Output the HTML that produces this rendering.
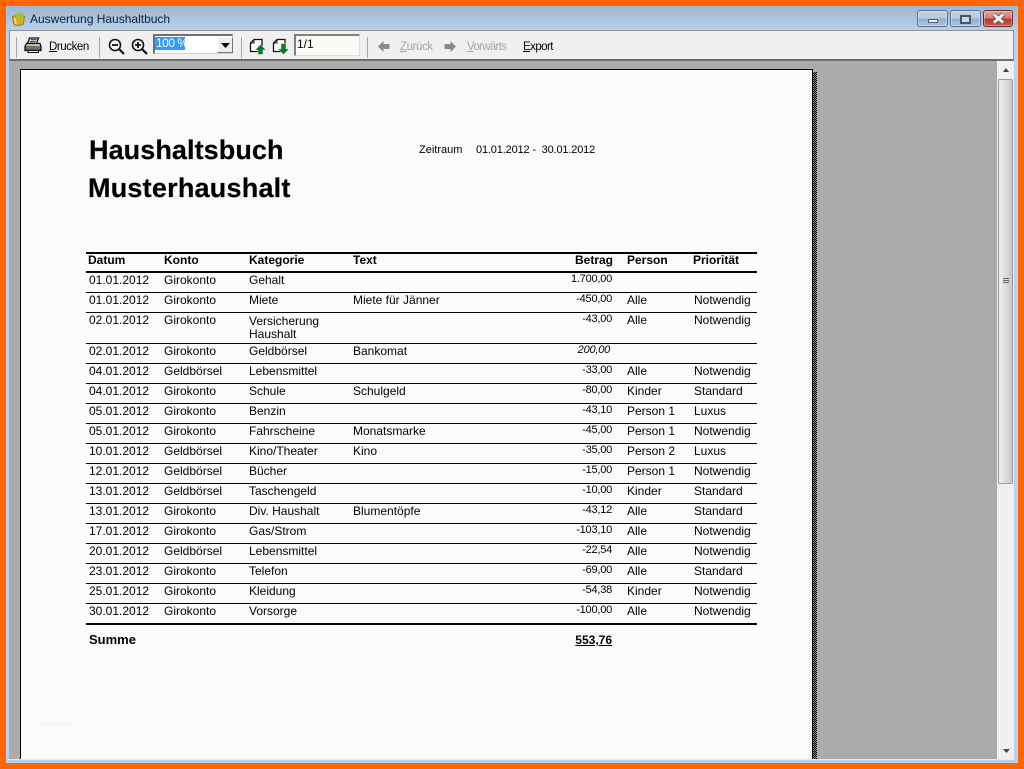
<!DOCTYPE html>
<html><head><meta charset="utf-8"><style>
html,body{margin:0;padding:0;width:1024px;height:769px;overflow:hidden;background:#ff6600}
body{position:relative;font-family:"Liberation Sans",sans-serif;color:#000}
div,svg{position:absolute}
.t{white-space:nowrap;font-size:12px;line-height:14px}
.b{font-weight:bold}
.r{text-align:right}
.m{font-size:11px;letter-spacing:-.22px}
.l{left:86px;width:671px;height:1px;background:#000}
.tb{font-size:11.5px;line-height:14px;white-space:nowrap;letter-spacing:-.42px}
.sep{width:1px;height:21px;top:37px;background:#a8a8a8}
u{text-decoration:underline}
.wb{top:10px;height:17px;border:1px solid #56708e;border-radius:3px;box-sizing:border-box;background:linear-gradient(#bcd0e6 0,#b6cce4 45%,#94aecb 55%,#adc5df 100%);box-shadow:inset 0 0 0 1px rgba(255,255,255,.35)}
</style></head><body>
<div style="left:6px;top:6px;width:1012px;height:757px;background:#b9d1ea"></div>
<div style="left:6px;top:6px;width:1012px;height:25px;background:linear-gradient(#9db6d3,#b9d2eb)"></div>
<svg style="left:11px;top:11px" width="16" height="16" viewBox="0 0 16 16"><path d="M1.500 5.500Q7 3.500 13.500 5.500L12.500 13Q7.500 15.500 3 13.500z" fill="#e0ac24" stroke="#8d7420" stroke-width=".9"/><path d="M4 4.500L6.500 1.500h3.500l3.500 2.500-2.500 3H6z" fill="#92c83e"/><path d="M3.500 7l1.500 6" stroke="#f7e08a" stroke-width="1.600"/></svg>
<div class="t" style="left:30px;top:12px;font-size:12px;color:#10202f">Auswertung Haushaltbuch</div>
<div class="wb" style="left:917px;width:31px"><div style="left:10px;top:8px;width:8px;height:2px;background:#eef2f7;border:1px solid #4d5f74"></div></div>
<div class="wb" style="left:950px;width:31px"><div style="left:9px;top:4px;width:7px;height:5px;border:2px solid #46586c;background:#c4d6ea"></div></div>
<div class="wb" style="left:983px;width:30px;border-color:#6e2a2a;background:linear-gradient(#e0a09a 0,#d67f76 45%,#b8392c 55%,#c9584b 100%)"><svg style="left:8px;top:1px" width="13" height="13" viewBox="0 0 13 13"><path d="M2 2.500l9 8M11 2.500l-9 8" stroke="#44505e" stroke-width="4.600"/><path d="M2 2.500l9 8M11 2.500l-9 8" stroke="#f4f4f4" stroke-width="3"/></svg></div>

<div style="left:9px;top:30px;width:1005px;height:31px;background:#f0f0f0;border-top:1px solid #8e9297;border-bottom:2px solid #6e6e6e;box-sizing:border-box;border-left:1px solid #8e9297;border-right:1px solid #8e9297"></div>
<div class="sep" style="left:16px"></div>
<div class="sep" style="left:99px"></div>
<div class="sep" style="left:241px"></div>
<div class="sep" style="left:367px"></div>
<svg style="left:24px;top:37px" width="18" height="17" viewBox="0 0 18 17"><path d="M5.500 1h9l-2 5.500h-9z" fill="#fff" stroke="#111" stroke-width="1.300"/><path d="M6.500 2.800h6M5.500 4.800h6" stroke="#111"/><path d="M2.500 6.500h13.500l1 3v4H1v-4z" fill="#ccc" stroke="#111" stroke-width="1.300"/><path d="M1.500 10h15M1.500 12h15" stroke="#111"/><path d="M4 8.500h7" stroke="#e3c040" stroke-width="1.500"/><path d="M4 13.500h10.500v2H4z" fill="#fff" stroke="#111"/></svg>
<div class="tb" style="left:49px;top:40px"><u>D</u>rucken</div>
<svg style="left:108px;top:38px" width="17" height="17" viewBox="0 0 17 17"><circle cx="7" cy="7" r="5.500" fill="#f8f8f8" stroke="#111" stroke-width="1.600"/><path d="M4 7h6" stroke="#111" stroke-width="1.800"/><path d="M11 11l5 5" stroke="#111" stroke-width="2.200"/></svg>
<svg style="left:131px;top:38px" width="17" height="17" viewBox="0 0 17 17"><circle cx="7" cy="7" r="5.500" fill="#f8f8f8" stroke="#111" stroke-width="1.600"/><path d="M4 7h6M7 4v6" stroke="#111" stroke-width="1.800"/><path d="M11 11l5 5" stroke="#111" stroke-width="2.200"/></svg>
<div style="left:153px;top:34px;width:80px;height:20px;background:#fff;border:1px solid #d0d0d0;border-top:2px solid #707070;border-left:2px solid #707070;box-sizing:border-box"></div>
<div class="t" style="left:155px;top:37px;width:30px;height:13px;line-height:13px;background:#3399ff;color:#fff;letter-spacing:-.5px;padding-left:0"><span style="margin-left:1px">100 %</span></div>
<div style="left:217px;top:37px;width:16px;height:16px;background:#eee;border:1px solid #777;border-top-color:#fff;border-left-color:#fff;box-sizing:border-box"></div>
<svg style="left:221px;top:43px" width="9" height="5" viewBox="0 0 9 5"><path d="M0 0h9L4.500 5z" fill="#000"/></svg>
<svg style="left:249px;top:37px" width="18" height="18" viewBox="0 0 18 18"><path d="M5 2.500h8v12H1.500V6z" fill="#fff" stroke="#111" stroke-width="1.300"/><path d="M5 2.500V6H1.500" fill="none" stroke="#111"/><path d="M11.500 7.500L17 13H14V17.500H9V13H6z" fill="#0a7a20" stroke="#f0f0f0" stroke-width=".5"/></svg>
<svg style="left:272px;top:37px" width="18" height="18" viewBox="0 0 18 18"><path d="M5 2.500h8v12H1.500V6z" fill="#fff" stroke="#111" stroke-width="1.300"/><path d="M5 2.500V6H1.500" fill="none" stroke="#111"/><path d="M9 6.500H14V12H17L11.500 17.500 6 12H9z" fill="#0a7a20" stroke="#f0f0f0" stroke-width=".5"/></svg>
<div style="left:294px;top:34px;width:66px;height:22px;background:#fbfbf6;border:1px solid #dcdcdc;border-top:2px solid #808080;border-left:2px solid #808080;box-sizing:border-box"></div>
<div class="t" style="left:297px;top:37px">1/1</div>
<svg style="left:378px;top:41px" width="12" height="11" viewBox="0 0 12 11"><path d="M0 5.500L5.500 0V3H11.500V8H5.500V11z" fill="#8c8c8c"/></svg>
<div class="tb" style="left:400px;top:40px;color:#a6a6a6"><u>Z</u>urück</div>
<svg style="left:444px;top:41px" width="12" height="11" viewBox="0 0 12 11"><path d="M12 5.500L6.500 0V3H.5V8H6.500V11z" fill="#8c8c8c"/></svg>
<div class="tb" style="left:467px;top:40px;color:#a6a6a6;letter-spacing:-.7px"><u>V</u>orwärts</div>
<div class="tb" style="left:523px;top:40px;letter-spacing:-.55px"><u>E</u>xport</div>

<div style="left:9px;top:61px;width:988px;height:698px;background:#ababab"></div>
<div style="left:813px;top:72px;width:4px;height:687px;background:repeating-conic-gradient(#000 0 25%,#888 0 50%) 0 0/2px 2px"></div>
<div style="left:20px;top:69px;width:793px;height:690px;background:#fbfbfb;border:solid #000;border-width:1px 1px 0 1px;box-sizing:border-box"></div>

<div style="left:997px;top:61px;width:17px;height:698px;background:#f0f0f0"></div>
<svg style="left:1003px;top:68px" width="6" height="4" viewBox="0 0 6 4"><path d="M3 0l3 4H0z" fill="#444"/></svg>
<svg style="left:1003px;top:749px" width="7" height="4" viewBox="0 0 7 4"><path d="M3.500 4l3.500-4H0z" fill="#444"/></svg>
<div style="left:998px;top:79px;width:15px;height:405px;border:1px solid #9a9a9a;border-radius:2px;box-sizing:border-box;background:linear-gradient(90deg,#f0f0f0,#dcdcdc 50%,#c8c8c8)"></div>
<svg style="left:1002px;top:277px" width="8" height="8" viewBox="0 0 8 8"><path d="M1 1.500h6M1 3.500h6M1 5.500h6" stroke="#666"/></svg>
<div style="left:8px;top:759px;width:1006px;height:1px;background:#f1e6e0"></div>

<div class="t b" style="left:89px;top:134px;font-size:27px;line-height:33px;-webkit-text-stroke:.2px #000;letter-spacing:.08px">Haushaltsbuch</div>
<div class="t b" style="left:88px;top:172px;font-size:27px;line-height:33px;-webkit-text-stroke:.2px #000;letter-spacing:.22px">Musterhaushalt</div>
<div class="t" style="left:419px;top:143px;font-size:11px">Zeitraum</div>
<div class="t" style="left:476px;top:143px;font-size:11px;letter-spacing:-.16px">01.01.2012 -&nbsp; 30.01.2012</div>
<div class="t" style="left:40px;top:718px;font-size:10px;color:#f1f1f1">vorlage</div>

<div class="l" style="top:252px;height:2px"></div>
<div class="l" style="top:271px;height:2px"></div>
<div class="l" style="top:292px"></div><div class="l" style="top:312px"></div><div class="l" style="top:343px"></div><div class="l" style="top:363px"></div><div class="l" style="top:383px"></div><div class="l" style="top:403px"></div><div class="l" style="top:423px"></div><div class="l" style="top:443px"></div><div class="l" style="top:463px"></div><div class="l" style="top:483px"></div><div class="l" style="top:503px"></div><div class="l" style="top:523px"></div><div class="l" style="top:543px"></div><div class="l" style="top:563px"></div><div class="l" style="top:583px"></div><div class="l" style="top:603px"></div>
<div class="l" style="top:623px;height:2px"></div>

<div class="t b" style="left:88px;top:253px">Datum</div><div class="t b" style="left:164px;top:253px">Konto</div><div class="t b" style="left:249px;top:253px">Kategorie</div><div class="t b" style="left:353px;top:253px">Text</div><div class="t b r" style="left:513px;width:100px;top:253px">Betrag</div><div class="t b" style="left:627px;top:253px">Person</div><div class="t b" style="left:693px;top:253px">Priorität</div>

<div class="t" style="left:89px;top:273px">01.01.2012</div><div class="t" style="left:164px;top:273px">Girokonto</div><div class="t" style="left:249px;top:273px">Gehalt</div><div class="t r m" style="left:512px;width:100px;top:272px">1.700,00</div>
<div class="t" style="left:89px;top:293px">01.01.2012</div><div class="t" style="left:164px;top:293px">Girokonto</div><div class="t" style="left:249px;top:293px">Miete</div><div class="t" style="left:353px;top:293px">Miete für Jänner</div><div class="t r m" style="left:512px;width:100px;top:292px">-450,00</div><div class="t" style="left:627px;top:293px">Alle</div><div class="t" style="left:694px;top:293px">Notwendig</div>
<div class="t" style="left:89px;top:313px">02.01.2012</div><div class="t" style="left:164px;top:313px">Girokonto</div><div class="t" style="left:249px;top:314px">Versicherung</div><div class="t" style="left:249px;top:327px">Haushalt</div><div class="t r m" style="left:512px;width:100px;top:312px">-43,00</div><div class="t" style="left:627px;top:313px">Alle</div><div class="t" style="left:694px;top:313px">Notwendig</div>
<div class="t" style="left:89px;top:344px">02.01.2012</div><div class="t" style="left:164px;top:344px">Girokonto</div><div class="t" style="left:249px;top:344px">Geldbörsel</div><div class="t" style="left:353px;top:344px">Bankomat</div><div class="t r m" style="left:510px;width:100px;top:343px;font-style:italic">200,00</div>
<div class="t" style="left:89px;top:364px">04.01.2012</div><div class="t" style="left:164px;top:364px">Geldbörsel</div><div class="t" style="left:249px;top:364px">Lebensmittel</div><div class="t r m" style="left:512px;width:100px;top:363px">-33,00</div><div class="t" style="left:627px;top:364px">Alle</div><div class="t" style="left:694px;top:364px">Notwendig</div>
<div class="t" style="left:89px;top:384px">04.01.2012</div><div class="t" style="left:164px;top:384px">Girokonto</div><div class="t" style="left:249px;top:384px">Schule</div><div class="t" style="left:353px;top:384px">Schulgeld</div><div class="t r m" style="left:512px;width:100px;top:383px">-80,00</div><div class="t" style="left:627px;top:384px">Kinder</div><div class="t" style="left:694px;top:384px">Standard</div>
<div class="t" style="left:89px;top:404px">05.01.2012</div><div class="t" style="left:164px;top:404px">Girokonto</div><div class="t" style="left:249px;top:404px">Benzin</div><div class="t r m" style="left:512px;width:100px;top:403px">-43,10</div><div class="t" style="left:627px;top:404px">Person 1</div><div class="t" style="left:694px;top:404px">Luxus</div>
<div class="t" style="left:89px;top:424px">05.01.2012</div><div class="t" style="left:164px;top:424px">Girokonto</div><div class="t" style="left:249px;top:424px">Fahrscheine</div><div class="t" style="left:353px;top:424px">Monatsmarke</div><div class="t r m" style="left:512px;width:100px;top:423px">-45,00</div><div class="t" style="left:627px;top:424px">Person 1</div><div class="t" style="left:694px;top:424px">Notwendig</div>
<div class="t" style="left:89px;top:444px">10.01.2012</div><div class="t" style="left:164px;top:444px">Geldbörsel</div><div class="t" style="left:249px;top:444px">Kino/Theater</div><div class="t" style="left:353px;top:444px">Kino</div><div class="t r m" style="left:512px;width:100px;top:443px">-35,00</div><div class="t" style="left:627px;top:444px">Person 2</div><div class="t" style="left:694px;top:444px">Luxus</div>
<div class="t" style="left:89px;top:464px">12.01.2012</div><div class="t" style="left:164px;top:464px">Geldbörsel</div><div class="t" style="left:249px;top:464px">Bücher</div><div class="t r m" style="left:512px;width:100px;top:463px">-15,00</div><div class="t" style="left:627px;top:464px">Person 1</div><div class="t" style="left:694px;top:464px">Notwendig</div>
<div class="t" style="left:89px;top:484px">13.01.2012</div><div class="t" style="left:164px;top:484px">Geldbörsel</div><div class="t" style="left:249px;top:484px">Taschengeld</div><div class="t r m" style="left:512px;width:100px;top:483px">-10,00</div><div class="t" style="left:627px;top:484px">Kinder</div><div class="t" style="left:694px;top:484px">Standard</div>
<div class="t" style="left:89px;top:504px">13.01.2012</div><div class="t" style="left:164px;top:504px">Girokonto</div><div class="t" style="left:249px;top:504px">Div. Haushalt</div><div class="t" style="left:353px;top:504px">Blumentöpfe</div><div class="t r m" style="left:512px;width:100px;top:503px">-43,12</div><div class="t" style="left:627px;top:504px">Alle</div><div class="t" style="left:694px;top:504px">Standard</div>
<div class="t" style="left:89px;top:524px">17.01.2012</div><div class="t" style="left:164px;top:524px">Girokonto</div><div class="t" style="left:249px;top:524px">Gas/Strom</div><div class="t r m" style="left:512px;width:100px;top:523px">-103,10</div><div class="t" style="left:627px;top:524px">Alle</div><div class="t" style="left:694px;top:524px">Notwendig</div>
<div class="t" style="left:89px;top:544px">20.01.2012</div><div class="t" style="left:164px;top:544px">Geldbörsel</div><div class="t" style="left:249px;top:544px">Lebensmittel</div><div class="t r m" style="left:512px;width:100px;top:543px">-22,54</div><div class="t" style="left:627px;top:544px">Alle</div><div class="t" style="left:694px;top:544px">Notwendig</div>
<div class="t" style="left:89px;top:564px">23.01.2012</div><div class="t" style="left:164px;top:564px">Girokonto</div><div class="t" style="left:249px;top:564px">Telefon</div><div class="t r m" style="left:512px;width:100px;top:563px">-69,00</div><div class="t" style="left:627px;top:564px">Alle</div><div class="t" style="left:694px;top:564px">Standard</div>
<div class="t" style="left:89px;top:584px">25.01.2012</div><div class="t" style="left:164px;top:584px">Girokonto</div><div class="t" style="left:249px;top:584px">Kleidung</div><div class="t r m" style="left:512px;width:100px;top:583px">-54,38</div><div class="t" style="left:627px;top:584px">Kinder</div><div class="t" style="left:694px;top:584px">Notwendig</div>
<div class="t" style="left:89px;top:604px">30.01.2012</div><div class="t" style="left:164px;top:604px">Girokonto</div><div class="t" style="left:249px;top:604px">Vorsorge</div><div class="t r m" style="left:512px;width:100px;top:603px">-100,00</div><div class="t" style="left:627px;top:604px">Alle</div><div class="t" style="left:694px;top:604px">Notwendig</div>

<div class="t b" style="left:89px;top:633px;font-size:13px">Summe</div>
<div class="t b r" style="left:512px;width:100px;top:633px"><u>553,76</u></div>
</body></html>
